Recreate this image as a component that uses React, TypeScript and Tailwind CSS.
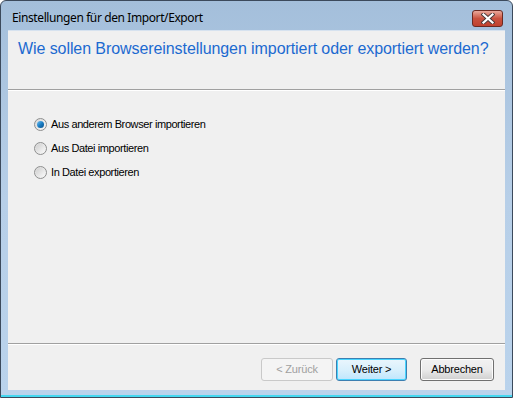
import React, { useState } from 'react'

const options = [
    'Aus anderem Browser importieren',
    'Aus Datei importieren',
    'In Datei exportieren',
]

function Radio({ checked }: { checked: boolean }) {
    return (
        <span className='w-[13px] h-[13px] rounded-full border border-[#8e8f8f] bg-gradient-to-br from-[#d9d9d9] to-[#f7f7f7] flex items-center justify-center shrink-0'>
            {checked ? (
                <span className='w-[7px] h-[7px] rounded-full bg-gradient-to-br from-[#6ec3f4] via-[#1a7ec4] to-[#0a4f8a]' />
            ) : (
                <span className='w-[9px] h-[9px] rounded-full bg-gradient-to-br from-[#cfcfcf] to-[#fafafa]' />
            )}
        </span>
    )
}

export default function App() {
    const [selected, setSelected] = useState<number>(0);

    return (
        <div className='w-[513px] h-[398px] flex flex-col border border-[#3c4a5c] rounded-t-[6px] bg-gradient-to-b from-[#a4bfdb] via-[#b7cfe8] to-[#bad3ec] font-["Liberation_Sans",Arial,sans-serif] select-none overflow-hidden'>
            <div className='h-[29px] flex items-start justify-between pl-[11px] pr-[9px]'>
                <span className='pt-[9px] text-[12px] text-black font-["Noto_Sans",sans-serif] leading-[16px] tracking-[-0.4px] whitespace-nowrap'>
                    Einstellungen für den Import/Export
                </span>
                <button className='mt-[9px] w-[31px] h-[17px] rounded-[3px] border border-[#6b2a22] bg-gradient-to-b from-[#e9a99c] via-[#c9523f] to-[#c0412e] flex items-center justify-center'>
                    <svg width='14' height='11' viewBox='0 0 14 11'>
                        <path d='M2.5 1.5 L11.5 9.5 M11.5 1.5 L2.5 9.5' stroke='#4a3a3a' strokeWidth='4' strokeLinecap='square' />
                        <path d='M2.5 1.5 L11.5 9.5 M11.5 1.5 L2.5 9.5' stroke='#ffffff' strokeWidth='2.2' strokeLinecap='square' />
                    </svg>
                </button>
            </div>

            <div className='flex-1 mx-[7px] flex flex-col bg-[#f0f0f0] border-t border-[#d6e2ef]'>
                <div className='h-[58px] pl-[10px] pt-[7px]'>
                    <h1 className='text-[16px] leading-[22px] text-[#1c6ad0] tracking-[-0.08px] whitespace-nowrap'>
                        Wie sollen Browsereinstellungen importiert oder exportiert werden?
                    </h1>
                </div>
                <div className='h-[2px] border-t border-[#a0a0a0] border-b border-b-white' />

                <div className='flex-1 flex flex-col gap-[11px] pl-[26px] pt-[27px]'>
                    {options.map((label, i) => (
                        <label key={label} className='flex items-center gap-[4px] h-[13px] text-[11px] text-black cursor-default' onClick={() => setSelected(i)}>
                            <Radio checked={selected === i} />
                            <span className='leading-[13px] tracking-[-0.4px]'>{label}</span>
                        </label>
                    ))}
                </div>

                <div className='h-[2px] border-t border-[#a0a0a0] border-b border-b-white' />
                <div className='h-[45px] flex items-start justify-end pr-[11px] pt-[13px]'>
                    <button disabled className='w-[72px] h-[23px] rounded-[3px] border border-[#c9c9c9] bg-[#f4f4f4] text-[11px] text-[#a0a0a0] tracking-[-0.2px]'>
                        &lt; Zurück
                    </button>
                    <button className='ml-[3px] w-[71px] h-[23px] rounded-[3px] border border-[#3c7fb1] shadow-[inset_0_0_0_1px_#48d5ff] bg-gradient-to-b from-[#eaf6fd] via-[#d9f0fc] to-[#bee6fd] text-[11px] text-black tracking-[-0.2px]'>
                        Weiter &gt;
                    </button>
                    <button className='ml-[13px] w-[74px] h-[23px] rounded-[3px] border border-[#707070] shadow-[inset_0_0_0_1px_#fcfcfc] bg-gradient-to-b from-[#f2f2f2] via-[#ebebeb] to-[#cfcfcf] text-[11px] text-black tracking-[-0.2px]'>
                        Abbrechen
                    </button>
                </div>
            </div>

            <div className='h-[7px] border-b-[2px] border-[#44d8f0]' />
        </div>
    )
}
